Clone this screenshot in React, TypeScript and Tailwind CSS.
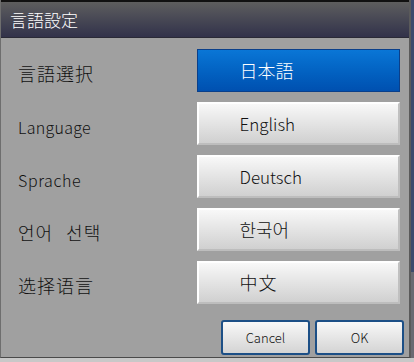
import React from "react";

const font = { fontFamily: '"Noto Sans CJK JP", "Noto Sans", sans-serif' };

const rows = [
  { label: "言語選択", lang: "日本語", active: true, size: "text-[18px] tracking-[1px]", btn: "text-[18px]" },
  { label: "Language", lang: "English", active: false, size: "text-[16px] tracking-[0.3px]", btn: "text-[17px]" },
  { label: "Sprache", lang: "Deutsch", active: false, size: "text-[16px] tracking-[0.6px]", btn: "text-[17px]" },
  { label: "언어 선택", lang: "한국어", active: false, size: "text-[18px] tracking-[1px] [word-spacing:8px]", btn: "text-[18px]" },
  { label: "选择语言", lang: "中文", active: false, size: "text-[18px] tracking-[1px]", btn: "text-[18px] tracking-[1px]" },
];

export default function App() {
  return (
    <div className="flex h-[362px] w-[414px] flex-col bg-[#c8c8c8] font-light" style={font}>
      <div className="flex h-[358px]">
        <div className="flex w-[411px] flex-col border-b border-l border-r-2 border-b-[#4a4a4a] border-l-[#6e6e6e] border-r-[#5a5a5a] bg-[#a0a0a0]">
          <div className="flex h-[38px] items-center border-t-2 border-b border-t-[#111] border-b-[#2a2a36] bg-gradient-to-b from-[#5e5e5e] to-[#32324a] pl-[9px] text-[17px] text-white">
            言語設定
          </div>
          <div className="flex flex-col gap-[10px] pr-[9px] pt-[11px]">
            {rows.map((r) => (
              <div key={r.lang} className="flex h-[43px] items-center">
                <div className={`w-[197px] pl-[17px] pt-[6px] text-[#111] ${r.size}`}>{r.label}</div>
                {r.active ? (
                  <div className={`flex h-[43px] w-[203px] items-center border border-[#0a3f8a] bg-gradient-to-b from-[#0a76d6] to-[#0050b0] pl-[41px] text-white ${r.btn}`}>
                    {r.lang}
                  </div>
                ) : (
                  <div className={`flex h-[43px] w-[203px] items-center border-2 border-t-white border-l-white border-r-[#c0c0c0] border-b-[#bdbdbd] bg-gradient-to-b from-[#f8f8f8] to-[#d0d0d0] pl-[40px] text-[#111] ${r.btn}`}>
                    {r.lang}
                  </div>
                )}
              </div>
            ))}
          </div>
          <div className="mt-auto flex justify-end gap-[5px] pb-[2px] pr-[5px]">
            <button className="h-[35px] w-[89px] rounded-[3px] border-2 border-[#1c4f86] bg-gradient-to-b from-[#f8f8f8] to-[#d4d4d4] text-[13px] text-[#111]">
              Cancel
            </button>
            <button className="h-[35px] w-[89px] rounded-[3px] border-2 border-[#1c4f86] bg-gradient-to-b from-[#f8f8f8] to-[#d4d4d4] text-[13px] text-[#111]">
              OK
            </button>
          </div>
        </div>
        <div className="flex flex-1 flex-col">
          <div className="h-[272px] bg-[#3c4a6c]" />
          <div className="flex-1 bg-[#6a6a72]" />
        </div>
      </div>
    </div>
  );
}
